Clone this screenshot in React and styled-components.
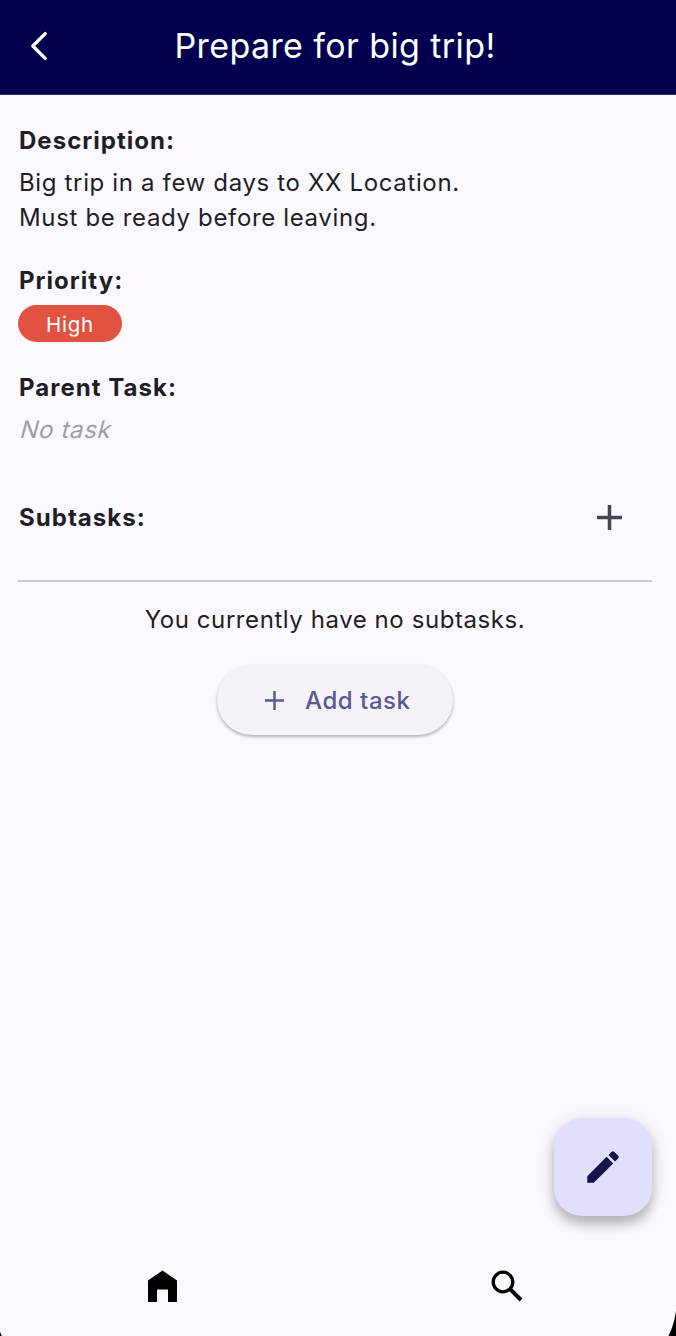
import React from "react";
import styled, { createGlobalStyle } from "styled-components";

const Global = createGlobalStyle`
  * { box-sizing: border-box; }
  body { margin: 0; background: #fbf9ff; }
  button { border: 0; padding: 0; background: none; font: inherit; color: inherit; cursor: pointer; }
`;

const Screen = styled.div`
  position: relative;
  display: flex;
  flex-direction: column;
  width: 676px;
  height: 1336px;
  overflow: hidden;
  background: #fbf9ff;
  color: #1f1e25;
  font-family: Inter, "Liberation Sans", sans-serif;
  font-size: 24px;
  font-weight: 400;
  line-height: 35px;
`;

const Header = styled.header`
  flex: none;
  display: grid;
  grid-template-columns: 78px 1fr 84px;
  align-items: center;
  height: 95px;
  padding-bottom: 2px;
  background: #01004e;
  border-bottom: 1px solid #322c72;
  color: #fff;
`;

const BackButton = styled.button`
  display: flex;
  justify-content: center;
`;

const Title = styled.h1`
  margin: 0;
  font-size: 34px;
  font-weight: 400;
  line-height: 44px;
  letter-spacing: 0.4px;
  text-align: center;
  white-space: nowrap;
`;

const Content = styled.main`
  flex: 1;
  display: flex;
  flex-direction: column;
  padding: 28px 24px 0 18px;
`;

const Section = styled.section`
  display: flex;
  flex-direction: column;
  align-items: flex-start;
  gap: 7px;
  margin-bottom: 28px;
`;

const Label = styled.h2`
  margin: 0;
  padding-left: 1px;
  font-size: 24px;
  font-weight: 700;
  line-height: 35px;
  letter-spacing: 1.03px;
`;

const Text = styled.p`
  margin: 0;
  padding-left: ${(p) => (p.$centered ? 0 : 1)}px;
  letter-spacing: ${(p) => (p.$centered ? 0.57 : 0.65)}px;
  white-space: pre-line;
`;

const EmptyValue = styled(Text)`
  padding-left: 3px;
  color: #a09fa3;
  transform: skewX(-15deg);
`;

const Chip = styled.span`
  display: flex;
  align-items: center;
  justify-content: center;
  width: 104px;
  height: 37px;
  padding-top: 2px;
  border-radius: 19px;
  background: #e15241;
  color: #fff;
  font-size: 20.5px;
  letter-spacing: 0.75px;
`;

const SubtaskHeader = styled.div`
  display: flex;
  align-items: center;
  justify-content: space-between;
  height: 85px;
  padding-right: 22px;
`;

const Divider = styled.hr`
  width: 100%;
  height: 2px;
  margin: 20px 0 20px;
  border: 0;
  background: #cac8d2;
`;

const EmptyState = styled.div`
  display: flex;
  flex-direction: column;
  align-items: center;
  gap: 28px;
`;

const IconButton = styled.button`
  display: flex;
  align-items: center;
  justify-content: center;
  width: 42px;
  height: 42px;
  color: #47464f;
`;

const AddButton = styled.button`
  display: flex;
  align-items: center;
  gap: 21px;
  width: 236px;
  height: 70px;
  padding: 1px 0 0 48px;
  border-radius: 35px;
  background: #f5f2fa;
  box-shadow: 0 2px 3px rgba(0, 0, 0, 0.23), 0 1px 4px rgba(0, 0, 0, 0.08);
  color: #585992;
  font-weight: 500;
  letter-spacing: 0.55px;
`;

const Fab = styled.button`
  position: absolute;
  right: 24px;
  bottom: 120px;
  display: flex;
  align-items: center;
  justify-content: center;
  width: 98px;
  height: 98px;
  border-radius: 28px;
  background: #e0e0fc;
  box-shadow: 0 8px 12px rgba(0, 0, 0, 0.24), 0 3px 20px rgba(0, 0, 0, 0.1);
  color: #14134a;
`;

const BottomNav = styled.nav`
  flex: none;
  display: grid;
  grid-template-columns: 324px 366px;
  height: 100px;
`;

const NavItem = styled.button`
  display: flex;
  align-items: center;
  justify-content: center;
  color: #000;
`;

const Corners = styled.svg`
  position: absolute;
  left: 0;
  bottom: 0;
  pointer-events: none;
`;

const PlusIcon = ({ size, weight }) => (
  <svg width={size} height={size} viewBox={`0 0 ${size} ${size}`} fill="none" stroke="currentColor" strokeWidth={weight}>
    <path d={`M${size / 2} 0V${size}M0 ${size / 2}H${size}`} />
  </svg>
);

export default function App() {
  return (
    <Screen>
      <Global />
      <Header>
        <BackButton aria-label="Back">
          <svg width="18" height="30" viewBox="0 0 18 30" fill="none" stroke="currentColor" strokeWidth="3.3">
            <path d="M15.2 2.6 2.8 15 15.2 27.4" strokeLinecap="round" strokeLinejoin="round" />
          </svg>
        </BackButton>
        <Title>Prepare for big trip!</Title>
      </Header>
      <Content>
        <Section>
          <Label>Description:</Label>
          <Text>{"Big trip in a few days to XX Location.\nMust be ready before leaving."}</Text>
        </Section>
        <Section>
          <Label>Priority:</Label>
          <Chip>High</Chip>
        </Section>
        <Section>
          <Label>Parent Task:</Label>
          <EmptyValue>No task</EmptyValue>
        </Section>
        <SubtaskHeader>
          <Label>Subtasks:</Label>
          <IconButton aria-label="Add subtask">
            <PlusIcon size={25} weight={3.5} />
          </IconButton>
        </SubtaskHeader>
        <Divider />
        <EmptyState>
          <Text $centered>You currently have no subtasks.</Text>
          <AddButton>
            <PlusIcon size={19} weight={2.4} />
            Add task
          </AddButton>
        </EmptyState>
      </Content>
      <BottomNav>
        <NavItem aria-label="Home">
          <svg width="29" height="32" viewBox="0 0 29 32" fill="currentColor">
            <path d="M0 10.5 14.5 0.5 29 10.5V32H20V19.5H9V32H0Z" />
          </svg>
        </NavItem>
        <NavItem aria-label="Search">
          <svg width="32" height="32" viewBox="0 0 32 32" fill="none" stroke="currentColor" strokeWidth="3.3">
            <circle cx="12" cy="12" r="9.8" />
            <path d="M18.7 18.7 30 30" strokeWidth="4" />
          </svg>
        </NavItem>
      </BottomNav>
      <Fab aria-label="Edit task">
        <svg width="42" height="42" viewBox="0 0 24 24" fill="currentColor">
          <path d="M3 17.25V21h3.75L17.81 9.94l-3.75-3.75L3 17.25zM20.71 7.04c.39-.39.39-1.02 0-1.41l-2.34-2.34a.9959.9959 0 0 0-1.41 0l-1.83 1.83 3.75 3.75 1.83-1.83z" />
        </svg>
      </Fab>
      <Corners width="676" height="26" viewBox="0 0 676 26">
        <path d="M676 1Q674 15 668.5 26H676ZM0 22 1.8 26H0Z" />
      </Corners>
    </Screen>
  );
}
